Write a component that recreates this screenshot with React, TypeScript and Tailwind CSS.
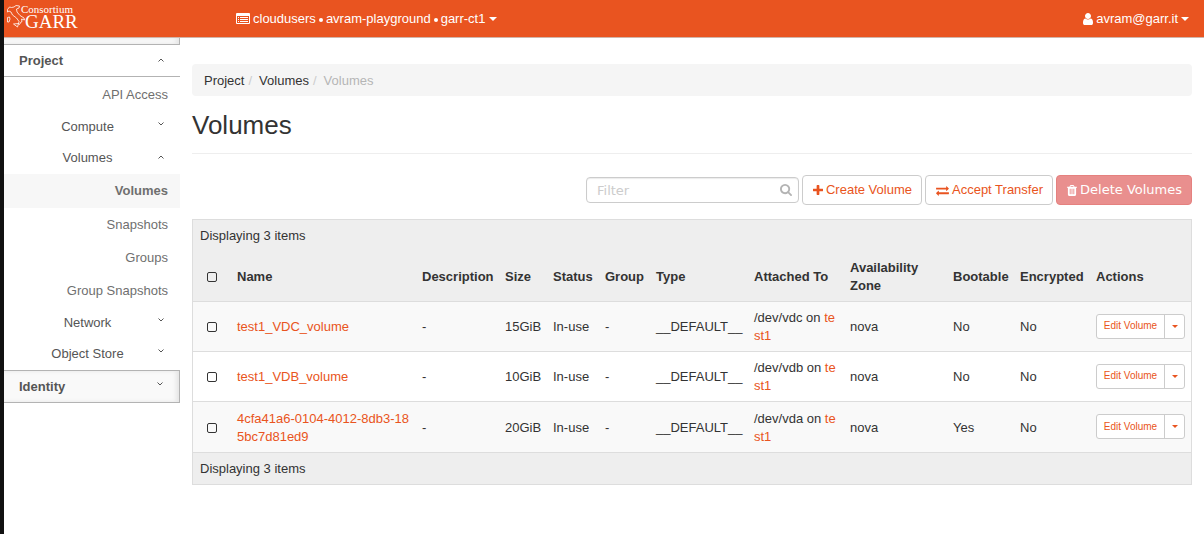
import type { ReactNode } from "react";

interface Volume {
  name: string;
  size: string;
  device: string;
  bootable: string;
}

interface NavEntry {
  label: string;
  kind: "group" | "leaf";
  open?: boolean;
  active?: boolean;
}

const volumes: Volume[] = [
  { name: "test1_VDC_volume", size: "15GiB", device: "/dev/vdc", bootable: "No" },
  { name: "test1_VDB_volume", size: "10GiB", device: "/dev/vdb", bootable: "No" },
  {
    name: "4cfa41a6-0104-4012-8db3-185bc7d81ed9",
    size: "20GiB",
    device: "/dev/vda",
    bootable: "Yes",
  },
];

const navEntries: NavEntry[] = [
  { label: "API Access", kind: "leaf" },
  { label: "Compute", kind: "group" },
  { label: "Volumes", kind: "group", open: true },
  { label: "Volumes", kind: "leaf", active: true },
  { label: "Snapshots", kind: "leaf" },
  { label: "Groups", kind: "leaf" },
  { label: "Group Snapshots", kind: "leaf" },
  { label: "Network", kind: "group" },
  { label: "Object Store", kind: "group" },
];

const columns = [
  { label: "Name", width: "w-[185px]" },
  { label: "Description", width: "w-[83px]" },
  { label: "Size", width: "w-[48px]" },
  { label: "Status", width: "w-[52px]" },
  { label: "Group", width: "w-[51px]" },
  { label: "Type", width: "w-[98px]" },
  { label: "Attached To", width: "w-[96px]" },
  { label: "Availability Zone", width: "w-[103px]" },
  { label: "Bootable", width: "w-[67px]" },
  { label: "Encrypted", width: "w-[76px]" },
  { label: "Actions", width: "w-[101px]" },
];

const icons = {
  plus: "M1600 736v192q0 40-28 68t-68 28h-416v416q0 40-28 68t-68 28h-192q-40 0-68-28t-28-68v-416h-416q-40 0-68-28t-28-68v-192q0-40 28-68t68-28h416v-416q0-40 28-68t68-28h192q40 0 68 28t28 68v416h416q40 0 68 28t28 68z",
  trash:
    "M704 1376v-704q0-14-9-23t-23-9h-64q-14 0-23 9t-9 23v704q0 14 9 23t23 9h64q14 0 23-9t9-23zm256 0v-704q0-14-9-23t-23-9h-64q-14 0-23 9t-9 23v704q0 14 9 23t23 9h64q14 0 23-9t9-23zm256 0v-704q0-14-9-23t-23-9h-64q-14 0-23 9t-9 23v704q0 14 9 23t23 9h64q14 0 23-9t9-23zm-544-992h448l-48-117q-7-9-17-11h-317q-10 2-17 11zm928 32v64q0 14-9 23t-23 9h-96v948q0 83-47 143.5t-113 60.5h-832q-66 0-113-58.5t-47-141.5v-952h-96q-14 0-23-9t-9-23v-64q0-14 9-23t23-9h309l70-167q15-37 54-63t79-26h320q40 0 79 26t54 63l70 167h309q14 0 23 9t9 23z",
  search:
    "M1216 832q0-185-131.5-316.5t-316.5-131.5-316.5 131.5-131.5 316.5 131.5 316.5 316.5 131.5 316.5-131.5 131.5-316.5zm512 832q0 52-38 90t-90 38q-54 0-90-38l-343-342q-179 124-399 124-143 0-273.5-55.5t-225-150-150-225-55.5-273.5 55.5-273.5 150-225 225-150 273.5-55.5 273.5 55.5 225 150 150 225 55.5 273.5q0 220-124 399l343 343q37 37 37 90z",
  exchange:
    "M1792 1184v192q0 13-9.5 22.5t-22.5 9.5h-1376v192q0 13-9.5 22.5t-22.5 9.5q-12 0-24-10l-319-320q-9-9-9-22 0-14 9-23l320-320q9-9 23-9 13 0 22.5 9.5t9.5 22.5v192h1376q13 0 22.5 9.5t9.5 22.5zm0-544q0 14-9 23l-320 320q-9 9-23 9-13 0-22.5-9.5t-9.5-22.5v-192h-1376q-13 0-22.5-9.5t-9.5-22.5v-192q0-13 9.5-22.5t22.5-9.5h1376v-192q0-14 9-23t23-9q12 0 24 10l319 319q9 9 9 23z",
  user: "M1536 1399q0 109-62.5 187t-150.5 78h-854q-88 0-150.5-78t-62.5-187q0-85 8.5-160.5t31.5-152 58.5-131 94-89 134.5-34.5q131 128 313 128t313-128q76 0 134.5 34.5t94 89 58.5 131 31.5 152 8.5 160.5zm-256-887q0 159-112.5 271.5t-271.5 112.5-271.5-112.5-112.5-271.5 112.5-271.5 271.5-112.5 271.5 112.5 112.5 271.5z",
};

function Icon({
  name,
  viewBox,
  className,
}: {
  name: keyof typeof icons;
  viewBox: string;
  className: string;
}) {
  return (
    <svg viewBox={viewBox} className={`shrink-0 fill-current ${className}`} aria-hidden="true">
      <path d={icons[name]} />
    </svg>
  );
}

function Caret({ className }: { className: string }) {
  return (
    <svg
      viewBox="0 0 8 4"
      preserveAspectRatio="none"
      className={`shrink-0 fill-current ${className}`}
      aria-hidden="true"
    >
      <path d="M0 0h8L4 4z" />
    </svg>
  );
}

function Chevron({ open }: { open?: boolean }) {
  return (
    <svg
      viewBox="0 0 6 4"
      className={`w-1.5 h-1 shrink-0 fill-none stroke-current ${open ? "mb-0.5" : "mb-1.5"}`}
      aria-hidden="true"
    >
      <path d={open ? "M.5 3.5 3 1l2.5 2.5" : "M.5.5 3 3 5.5.5"} />
    </svg>
  );
}

function Logo() {
  return (
    <a href="#" aria-label="Consortium GARR" className="block shrink-0">
      <svg viewBox="0 0 74 30" className="w-[74px] h-[30px]" fill="#fff">
        <path
          d="M1.5 5.5 3.5 3l2 .5L8 3l2-1.500 3.500.500-.5 2-2.500 1 .5 3 3 3.500 4 2.500.5 2-3-1 .5 2.500-1 .5-1.500 2.500-1-.5.5-2.500-2.500-3.500-4-3L5 8 3 7 1.500 8zM7.500 20l5-.5-1 3.500zM1.500 13.500l2-.5.5 2-1 3H1.500z"
          fill="none"
          stroke="#fff"
          strokeWidth=".8"
          strokeLinejoin="round"
        />
        <text x="15" y="9" fontSize="11" fontFamily="Liberation Serif, serif">
          Consortium
        </text>
        <text x="19" y="24" fontSize="19" fontFamily="Liberation Serif, serif">
          GARR
        </text>
      </svg>
    </a>
  );
}

function Dot() {
  return <span className="w-1 h-1 mx-[3px] mt-0.5 rounded-full bg-white" />;
}

function Header() {
  return (
    <header className="flex items-center h-[38px] bg-[#e95420] border-b border-[#d0b5aa] text-white pl-0.5 pr-[15px]">
      <div className="w-[230px] shrink-0">
        <Logo />
      </div>
      <button className="flex items-center whitespace-nowrap">
        <svg
          viewBox="0 0 14 11"
          className="w-3.5 h-[11px] mr-[3px] shrink-0 fill-current"
          aria-hidden="true"
        >
          <path
            fillRule="evenodd"
            d="M1 0h12q1 0 1 1v9q0 1-1 1H1q-1 0-1-1V1q0-1 1-1zm0 3v7h12V3z"
          />
          <path d="M2 4h1v1H2zm2 0h8v1H4zM2 6h1v1H2zm2 0h8v1H4zM2 8h1v1H2zm2 0h8v1H4z" />
        </svg>
        cloudusers
        <Dot />
        avram-playground
        <Dot />
        garr-ct1
        <Caret className="w-2 h-1 ml-1" />
      </button>
      <button className="flex items-center ml-auto whitespace-nowrap">
        <Icon name="user" viewBox="256 128 1280 1536" className="w-2.5 h-3 mr-[3px]" />
        avram@garr.it
        <Caret className="w-2 h-1 ml-[3px]" />
      </button>
    </header>
  );
}

function Sidebar() {
  return (
    <nav className="w-44 shrink-0 text-[#555]">
      <div className="h-[7px] bg-[#f9f9f9] border-b border-r border-[#b3b3b3] shadow-[inset_-3px_0_4px_rgba(0,0,0,0.08)]" />
      <button className="flex items-center w-full h-8 pl-[15px] pr-4 font-bold border-b border-[#b3b3b3]">
        <span className="flex-1 text-left">Project</span>
        <Chevron open />
      </button>
      <ul className="py-px">
        {navEntries.map((entry) => (
          <li key={`${entry.kind}-${entry.label}`}>
            {entry.kind === "group" ? (
              <button
                className={`flex items-center gap-0.5 w-full pl-[15px] pr-4 ${
                  entry.open ? "h-8" : "h-[31px]"
                }`}
              >
                <span className="flex-1 text-center">{entry.label}</span>
                <Chevron open={entry.open} />
              </button>
            ) : (
              <a
                href="#"
                className={`flex items-center justify-end pr-3 text-[#6f6f6f] ${
                  entry.active ? "h-[34px] bg-[#f7f7f7] font-bold" : "h-[33px]"
                }`}
              >
                {entry.label}
              </a>
            )}
          </li>
        ))}
      </ul>
      <button className="flex items-center w-full h-[33px] pl-[15px] pr-4 font-bold bg-[#f9f9f9] border-y border-r border-[#b3b3b3] shadow-[inset_-3px_0_4px_rgba(0,0,0,0.08)]">
        <span className="flex-1 text-left">Identity</span>
        <Chevron />
      </button>
    </nav>
  );
}

function ActionButton({ children }: { children: ReactNode }) {
  return (
    <button className="flex items-center h-[30px] pl-2.5 pr-[9px] bg-white border border-[#ccc] rounded text-[#e95420] whitespace-nowrap">
      {children}
    </button>
  );
}

function Toolbar() {
  return (
    <div className="flex items-center justify-end gap-[3px] mt-[21px] mb-3.5">
      <div className="relative w-[213px]">
        <input
          type="text"
          placeholder="Filter"
          aria-label="Filter"
          className="block w-full h-[26px] pl-2.5 pr-7 bg-white border border-[#ccc] rounded font-['DejaVu_Sans',sans-serif] placeholder:text-[#ccc] shadow-[inset_0_1px_1px_rgba(0,0,0,0.08)]"
        />
        <Icon
          name="search"
          viewBox="64 128 1664 1664"
          className="absolute right-[7px] top-[7px] w-3 h-3 text-[#b3b3b3]"
        />
      </div>
      <ActionButton>
        <Icon name="plus" viewBox="192 128 1408 1408" className="w-2.5 h-2.5 mr-[3px]" />
        Create Volume
      </ActionButton>
      <ActionButton>
        <Icon name="exchange" viewBox="0 128 1792 1536" className="w-[13px] h-[11px] mr-[3px]" />
        Accept Transfer
      </ActionButton>
      <button
        disabled
        className="flex items-center h-[30px] pl-2.5 pr-[9px] bg-[#e98f8e] border border-[#e5817f] rounded text-white font-['DejaVu_Sans',sans-serif] whitespace-nowrap"
      >
        <Icon name="trash" viewBox="192 128 1408 1536" className="w-2.5 h-[11px] mr-[3px]" />
        Delete Volumes
      </button>
    </div>
  );
}

function Checkbox({ label }: { label: string }) {
  return (
    <input
      type="checkbox"
      aria-label={label}
      className="block appearance-none w-2.5 h-2.5 mx-auto border border-[#333] rounded-xs"
    />
  );
}

function Cell({ children, className = "" }: { children: ReactNode; className?: string }) {
  return <td className={`px-1.5 pt-0.5 ${className}`}>{children}</td>;
}

function VolumeRow({ volume }: { volume: Volume }) {
  return (
    <tr className="h-[50px] last:h-[51px] border-t border-[#ddd] odd:bg-[#f9f9f9] even:bg-white">
      <td className="pt-0.5">
        <Checkbox label={`Select ${volume.name}`} />
      </td>
      <Cell className="break-all">
        <a href="#" className="text-[#e95420]">
          {volume.name}
        </a>
      </Cell>
      <Cell>-</Cell>
      <Cell>{volume.size}</Cell>
      <Cell className="whitespace-nowrap">In-use</Cell>
      <Cell>-</Cell>
      <Cell>__DEFAULT__</Cell>
      <Cell className="break-all">
        {volume.device} on{" "}
        <a href="#" className="text-[#e95420]">
          test1
        </a>
      </Cell>
      <Cell>nova</Cell>
      <Cell>{volume.bootable}</Cell>
      <Cell>No</Cell>
      <td className="px-1.5">
        <div className="flex w-[89px] h-[25px] bg-white border border-[#ccc] rounded-[3px] text-[#e95420]">
          <button className="flex-1 text-[10px] whitespace-nowrap">Edit Volume</button>
          <button
            aria-label="More actions"
            className="flex items-center justify-center w-5 border-l border-[#ccc]"
          >
            <Caret className="w-1.5 h-[3px]" />
          </button>
        </div>
      </td>
    </tr>
  );
}

function VolumesTable() {
  return (
    <div className="border border-[#ddd] bg-[#eee]">
      <div className="h-8 pl-[7px] leading-8">Displaying 3 items</div>
      <table className="w-full table-fixed border-collapse text-left">
        <thead>
          <tr className="h-[49px]">
            <th className="w-[38px] pt-0.5">
              <Checkbox label="Select all volumes" />
            </th>
            {columns.map((column) => (
              <th key={column.label} className={`px-1.5 pt-0.5 ${column.width}`}>
                {column.label}
              </th>
            ))}
          </tr>
        </thead>
        <tbody>
          {volumes.map((volume) => (
            <VolumeRow key={volume.name} volume={volume} />
          ))}
        </tbody>
      </table>
      <div className="h-8 pl-[7px] leading-8 border-t border-[#ddd]">Displaying 3 items</div>
    </div>
  );
}

export default function App() {
  return (
    <div className="min-h-screen flex bg-white font-['Liberation_Sans',Arial,sans-serif] text-[13px] leading-[18px] text-[#333]">
      <div className="w-1 shrink-0 bg-[#111]" />
      <div className="flex-1 min-w-0">
        <Header />
        <div className="flex">
          <Sidebar />
          <main className="flex-1 min-w-0 px-3 pt-[26px]">
            <nav aria-label="Breadcrumb" className="h-8 px-3 pt-0.5 bg-[#f5f5f5] rounded">
              <ol className="flex items-center h-full">
                <li>
                  <a href="#">Project</a>
                  <span className="px-1 text-[#ccc]">/</span>
                </li>
                <li className="ml-[3px]">
                  <a href="#">Volumes</a>
                  <span className="px-1 text-[#ccc]">/</span>
                </li>
                <li className="ml-[3px] text-[#b5b5b5]">Volumes</li>
              </ol>
            </nav>
            <h1 className="pt-[15px] pb-[13px] text-[26px] leading-[29px] border-b border-[#eee]">
              Volumes
            </h1>
            <Toolbar />
            <VolumesTable />
          </main>
        </div>
      </div>
    </div>
  );
}
